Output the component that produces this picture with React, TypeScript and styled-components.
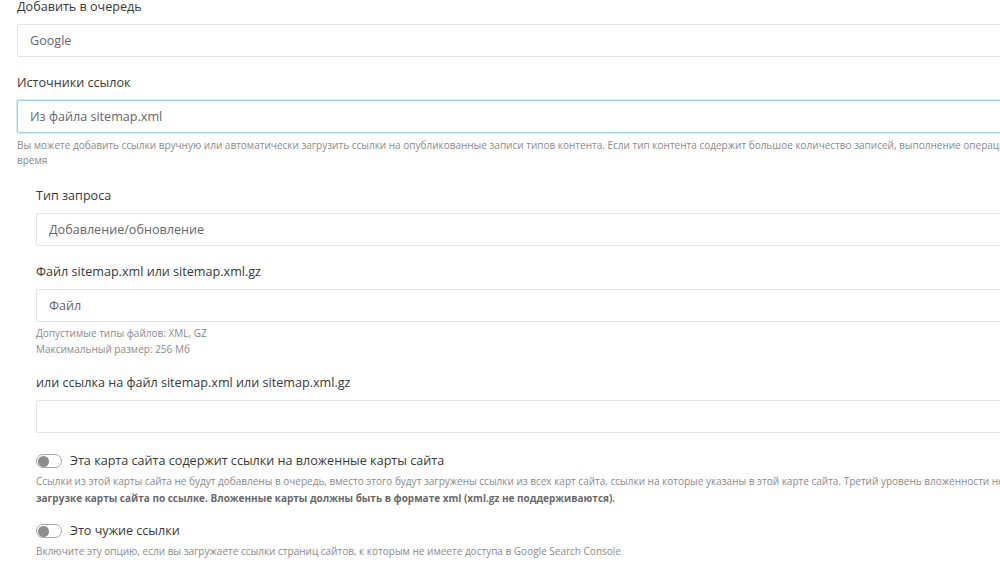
import styled, { createGlobalStyle } from "styled-components";

const GlobalStyle = createGlobalStyle`
  html, body {
    margin: 0;
    padding: 0;
    background: #fff;
    overflow: hidden;
  }
  body {
    font-family: "Open Sans", "Noto Sans", Arial, sans-serif;
    color: #333;
  }
`;

const Page = styled.div`
  width: 1120px;
  padding: 0 0 0 17px;
  box-sizing: border-box;
`;

const Field = styled.div<{ $gap?: number }>`
  display: flex;
  flex-direction: column;
  margin-bottom: ${(p) => p.$gap ?? 17}px;
`;

const Label = styled.label<{ $top?: number }>`
  font-size: 12.6px;
  line-height: 18px;
  color: #383838;
  margin-top: ${(p) => p.$top ?? 0}px;
  margin-bottom: 8px;
`;

const TextInput = styled.input<{ $focused?: boolean }>`
  height: 33px;
  box-sizing: border-box;
  padding: 0 12px;
  font-family: inherit;
  font-size: 12.6px;
  color: #666;
  background: #fff;
  border: 1px solid ${(p) => (p.$focused ? "#9bd3ec" : "#e4e4e4")};
  box-shadow: ${(p) => (p.$focused ? "0 0 0 1px #d2ecf8" : "none")};
  border-radius: 2px;
  outline: none;
`;

const Help = styled.div<{ $lh?: number; $top?: number }>`
  font-size: 10px;
  line-height: ${(p) => p.$lh ?? 14.5}px;
  color: #8a8a8a;
  white-space: nowrap;
  margin-top: ${(p) => p.$top ?? 5}px;

  b {
    font-weight: 700;
    color: #6a6a6a;
  }
`;

const Nested = styled.div`
  padding-left: 19px;
  margin-top: 20px;
`;

const SwitchRow = styled.label`
  display: flex;
  align-items: center;
  gap: 8px;
  font-size: 12.6px;
  line-height: 18px;
  color: #383838;
`;

const Track = styled.span`
  width: 26px;
  height: 14px;
  box-sizing: border-box;
  border: 1px solid #a8a8a8;
  border-radius: 7px;
  background: #fff;
  display: flex;
  align-items: center;
  padding: 0 1px;
`;

const Knob = styled.span`
  width: 11px;
  height: 11px;
  border-radius: 50%;
  background: #8c8c8c;
`;

const SwitchBlock = styled.div<{ $gap?: number }>`
  margin-bottom: ${(p) => p.$gap ?? 0}px;
`;

function Switch({ label }: { label: string }) {
  return (
    <SwitchRow>
      <Track>
        <Knob />
      </Track>
      {label}
    </SwitchRow>
  );
}

export default function App() {
  return (
    <>
      <GlobalStyle />
      <Page>
        <Field>
          <Label $top={-2}>Добавить в очередь</Label>
          <TextInput readOnly value="Google" />
        </Field>

        <Field $gap={0}>
          <Label>Источники ссылок</Label>
          <TextInput readOnly $focused value="Из файла sitemap.xml" />
          <Help>
            Вы можете добавить ссылки вручную или автоматически загрузить ссылки на опубликованные
            записи типов контента. Если тип контента содержит большое количество записей, выполнение
            операции может занять некоторое
            <br />
            время
          </Help>
        </Field>

        <Nested>
          <Field $gap={17}>
            <Label>Тип запроса</Label>
            <TextInput readOnly value="Добавление/обновление" />
          </Field>

          <Field>
            <Label>Файл sitemap.xml или sitemap.xml.gz</Label>
            <TextInput readOnly value="Файл" />
            <Help $lh={15.5} $top={4}>
              Допустимые типы файлов: XML, GZ
              <br />
              Максимальный размер: 256 Мб
            </Help>
          </Field>

          <Field $gap={19}>
            <Label>или ссылка на файл sitemap.xml или sitemap.xml.gz</Label>
            <TextInput readOnly value="" />
          </Field>

          <SwitchBlock $gap={15}>
            <Switch label="Эта карта сайта содержит ссылки на вложенные карты сайта" />
            <Help $lh={17} $top={3}>
              Ссылки из этой карты сайта не будут добавлены в очередь, вместо этого будут загружены
              ссылки из всех карт сайта, ссылки на которые указаны в этой карте сайта. Третий уровень
              вложенности не учитывается при
              <br />
              <b>
                загрузке карты сайта по ссылке. Вложенные карты должны быть в формате xml (xml.gz не
                поддерживаются).
              </b>
            </Help>
          </SwitchBlock>

          <SwitchBlock>
            <Switch label="Это чужие ссылки" />
            <Help $lh={17} $top={3}>
              Включите эту опцию, если вы загружаете ссылки страниц сайтов, к которым не имеете
              доступа в Google Search Console
            </Help>
          </SwitchBlock>
        </Nested>
      </Page>
    </>
  );
}
